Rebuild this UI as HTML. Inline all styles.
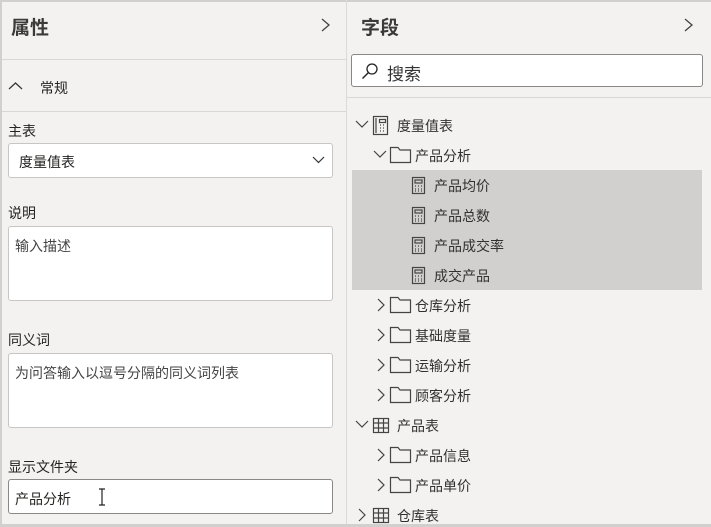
<!DOCTYPE html>
<html><head><meta charset="utf-8"><style>
*{box-sizing:border-box;margin:0;padding:0}
body{width:711px;height:527px;overflow:hidden;background:#f3f2f1;font-family:"Liberation Sans","Noto Sans CJK SC",sans-serif;color:#252423;position:relative}
.abs{position:absolute}
.frame{position:absolute;left:0;top:0;width:711px;height:527px;border:2px solid #d2d0ce;border-right:none}
.title{font-size:19px;font-weight:bold;color:#3b3a39}
.lbl{font-size:14px;color:#252423}
.box{position:absolute;background:#fff;border:1px solid #c8c6c4;border-radius:3px}
.sep{position:absolute;height:1px;background:#d9d7d5}
.row{position:absolute;font-size:14px;color:#323130;white-space:nowrap;line-height:20px}
svg{position:absolute;overflow:visible}
</style></head><body>
<div class="frame"></div>
<div class="abs" style="left:346px;top:0;width:1px;height:527px;background:#dcdad8"></div>

<div class="abs title" style="left:11px;top:13px">属性</div>
<svg style="left:321px;top:18px" width="10" height="14"><path d="M1 1 L8 7 L1 13" fill="none" stroke="#444" stroke-width="1.3"/></svg>
<div class="sep" style="left:2px;top:59px;width:344px"></div>
<svg style="left:8px;top:81px" width="16" height="10"><path d="M1 8 L7.5 2 L14 8" fill="none" stroke="#333" stroke-width="1.2"/></svg>
<div class="abs lbl" style="left:40px;top:78px">常规</div>
<div class="sep" style="left:2px;top:111px;width:344px"></div>

<div class="abs lbl" style="left:8px;top:121px">主表</div>
<div class="box" style="left:8px;top:143px;width:325px;height:35px"></div>
<div class="abs lbl" style="left:19px;top:152px">度量值表</div>
<svg style="left:312px;top:156px" width="14" height="8"><path d="M1 1 L6.5 6.5 L12 1" fill="none" stroke="#333" stroke-width="1.2"/></svg>

<div class="abs lbl" style="left:8px;top:203px">说明</div>
<div class="box" style="left:8px;top:226px;width:325px;height:75px"></div>
<div class="abs lbl" style="left:15px;top:236px;color:#444">输入描述</div>

<div class="abs lbl" style="left:8px;top:330px">同义词</div>
<div class="box" style="left:8px;top:353px;width:325px;height:75px"></div>
<div class="abs lbl" style="left:15px;top:363px;color:#444">为问答输入以逗号分隔的同义词列表</div>

<div class="abs lbl" style="left:8px;top:457px">显示文件夹</div>
<div class="box" style="left:8px;top:479px;width:325px;height:35px;border-color:#8a8886"></div>
<div class="abs lbl" style="left:15px;top:489px">产品分析</div>
<svg style="left:98px;top:488px" width="8" height="18"><path d="M1 1 H7 M4 1 V17 M1 17 H7" fill="none" stroke="#222" stroke-width="1.2"/></svg>

<div class="abs title" style="left:361px;top:13px">字段</div>
<svg style="left:684px;top:18px" width="10" height="14"><path d="M1 1 L8 7 L1 13" fill="none" stroke="#444" stroke-width="1.3"/></svg>
<div class="box" style="left:351px;top:54px;width:352px;height:33px;border-color:#8a8886"></div>
<svg style="left:361px;top:62px" width="18" height="18"><circle cx="11" cy="7" r="5" fill="none" stroke="#222" stroke-width="1.3"/><path d="M7.5 10.5 L1.5 16.5" stroke="#222" stroke-width="1.4"/></svg>
<div class="abs" style="left:387px;top:60px;font-size:17px;color:#333">搜索</div>
<div class="sep" style="left:347px;top:97px;width:364px"></div>

<div class="abs" style="left:352px;top:170px;width:350px;height:120px;background:#d2d0ce"></div>

<svg style="left:0;top:0" width="711" height="527">
<g fill="none" stroke="#444" stroke-width="1.2">
<path d="M356 121 L362 127 L368 121"/>
<rect x="373.5" y="116.5" width="14" height="18"/><path d="M376 118 V133"/>
<rect x="379.5" y="119.5" width="6" height="3"/>
<path d="M380 125 h1 M383 125 h1 M380 128 h1 M383 128 h1 M380 131 h1 M383 131 h1"/>
<path d="M374 151 L380 157 L386 151"/>
<path d="M390.5 147.5 H398 L400 150 H410.5 V162.5 H390.5 Z"/>
<g id="c"><rect x="412.5" y="177.5" width="12" height="16"/><rect x="415" y="180" width="7" height="3"/><path d="M415 186 h1 M418 186 h1 M421 186 h1 M415 189 h1 M418 189 h1 M421 189 h1 M415 191 h1 M418 191 h1 M421 191 h1"/></g>
<use href="#c" y="30"/><use href="#c" y="60"/><use href="#c" y="90"/>
<g id="f"><path d="M378 299 L384 305 L378 311"/><path d="M390.5 297.5 H398 L400 300 H410.5 V312.5 H390.5 Z"/></g>
<use href="#f" y="30"/><use href="#f" y="60"/><use href="#f" y="90"/>
<path d="M356 421 L362 427 L368 421"/>
<g id="t"><rect x="373.5" y="418.5" width="15" height="14"/><path d="M373.5 423 H388.5 M373.5 428 H388.5 M378.5 418.5 V432.5 M383.5 418.5 V432.5"/></g>
<use href="#f" y="150"/><use href="#f" y="180"/>
<path d="M359 509 L365 515 L359 521"/>
<use href="#t" y="90"/>
</g>
</svg>
<div class="row" style="left:397px;top:116px">度量值表</div>
<div class="row" style="left:415px;top:146px">产品分析</div>
<div class="row" style="left:434px;top:176px">产品均价</div>
<div class="row" style="left:434px;top:206px">产品总数</div>
<div class="row" style="left:434px;top:236px">产品成交率</div>
<div class="row" style="left:434px;top:266px">成交产品</div>
<div class="row" style="left:415px;top:296px">仓库分析</div>
<div class="row" style="left:415px;top:326px">基础度量</div>
<div class="row" style="left:415px;top:356px">运输分析</div>
<div class="row" style="left:415px;top:386px">顾客分析</div>
<div class="row" style="left:397px;top:416px">产品表</div>
<div class="row" style="left:415px;top:446px">产品信息</div>
<div class="row" style="left:415px;top:476px">产品单价</div>
<div class="row" style="left:397px;top:506px">仓库表</div>
<div class="abs" style="left:0;top:524px;width:711px;height:3px;background:#d2d0ce"></div>
</body></html>
